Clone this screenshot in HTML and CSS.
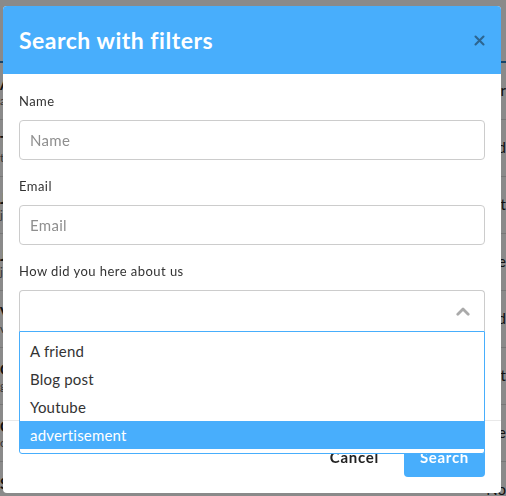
FILE: index.html
```html
<!DOCTYPE html>
<html lang="en">

<head>
    <meta charset="UTF-8">
    <meta name="viewport" content="width=device-width, initial-scale=1.0">
    <title>Search with filters</title>
    <link rel="stylesheet" href="styles.css">
</head>

<body>
    <!-- page behind the modal -->
    <div class="page">
        <div class="topbar"></div>
        <div class="row"><b>Anna Jovanovich</b><span>anna@mail.com</span><em>Newsletter</em></div>
        <div class="row"><b>Tony Vargas</b><span>tony@mail.com</span><em>Friend</em></div>
        <div class="row"><b>Jill Simmons</b><span>jill@mail.com</span><em>Blog post</em></div>
        <div class="row"><b>Jimmy Hall</b><span>jimmy@mail.com</span><em>Youtube</em></div>
        <div class="row"><b>Vera Long</b><span>vera@mail.com</span><em>Friend</em></div>
        <div class="row"><b>Greg Dunn</b><span>greg@mail.com</span><em>Blog post</em></div>
        <div class="row"><b>Carl Stone</b><span>carl@mail.com</span><em>Youtube</em></div>
        <div class="row"><b>Subscribe?</b><span>yes</span><em>No</em></div>
    </div>

    <div class="overlay"></div>

    <div class="modal">
        <div class="modal-header">
            <h2>Search with filters</h2>
            <button class="close" aria-label="Close">
                <svg width="11" height="11" viewBox="0 0 11 11">
                    <path d="M1.5 1.5 L9.5 9.5 M9.5 1.5 L1.5 9.5" stroke="#2d6590" stroke-width="2.1" stroke-linecap="round" />
                </svg>
            </button>
        </div>

        <div class="modal-body">
            <label for="f-name">Name</label>
            <input type="text" id="f-name" placeholder="Name">

            <label for="f-email">Email</label>
            <input type="text" id="f-email" placeholder="Email">

            <label>How did you here about us</label>
            <div class="select">
                <div class="select-box">
                    <svg width="14" height="9" viewBox="0 0 14 9">
                        <path d="M1.8 7.2 L7 2 L12.2 7.2" fill="none" stroke="#aaa" stroke-width="2.8" stroke-linecap="round" stroke-linejoin="round" />
                    </svg>
                </div>
                <ul class="options">
                    <li>A friend</li>
                    <li>Blog post</li>
                    <li>Youtube</li>
                    <li class="active">advertisement</li>
                </ul>
            </div>
        </div>

        <div class="modal-footer">
            <button class="btn-cancel">Cancel</button>
            <button class="btn-search">Search</button>
        </div>
    </div>
</body>

</html>
```

FILE: styles.css
```css
* {
    margin: 0;
    padding: 0;
    box-sizing: border-box;
    font-family: Lato, "Open Sans", sans-serif;
}

body {
    background-color: #fff;
    width: 506px;
    height: 496px;
    overflow: hidden;
}

/* background page */
.page {
    width: 100%;
}

.topbar {
    height: 63px;
    border-bottom: 2px solid #2d7fc0;
}

.row {
    height: 57px;
    border-bottom: 1px solid #ddd;
    display: flex;
    flex-direction: column;
    justify-content: center;
    align-items: flex-start;
    position: relative;
    font-size: 15px;
    color: #222;
}

.row b {
    display: block;
}

.row span {
    font-size: 12px;
    color: #666;
}

.row em {
    position: absolute;
    right: 0;
    top: 18px;
    font-style: normal;
    font-size: 15px;
}

.overlay {
    position: fixed;
    inset: 0;
    background: rgba(0, 0, 0, 0.46);
}

/* modal */
.modal {
    position: absolute;
    left: 3px;
    top: 6px;
    width: 498px;
    height: 487px;
    background-color: #fff;
    border-radius: 4px;
    display: flex;
    flex-direction: column;
}

.modal-header {
    height: 68px;
    background-color: #48aefc;
    border-radius: 4px 4px 0 0;
    display: flex;
    align-items: center;
    justify-content: space-between;
    padding: 0 12px 0 16px;
}

.modal-header h2 {
    color: #fff;
    font-size: 23px;
    font-weight: bold;
    letter-spacing: 0.5px;
}

.close {
    background: none;
    border: none;
    width: 20px;
    height: 20px;
    display: flex;
    align-items: center;
    justify-content: center;
}

.modal-body {
    flex: 1;
    padding: 19px 16px 0;
    display: flex;
    flex-direction: column;
}

label {
    display: block;
    font-size: 13px;
    line-height: 16px;
    letter-spacing: 0.45px;
    color: #333;
    margin-bottom: 11px;
}

input {
    height: 40px;
    padding: 0 10px;
    border: 1px solid #ccc;
    border-radius: 4px;
    font-size: 15px;
    letter-spacing: 0.3px;
    color: #333;
    margin-bottom: 18px;
    width: 100%;
}

input::placeholder {
    color: #8f8f8f;
}

.select {
    position: relative;
}

.select-box {
    height: 41px;
    border: 1px solid #ccc;
    border-radius: 4px 4px 0 0;
    border-bottom: none;
    display: flex;
    align-items: center;
    justify-content: flex-end;
    padding-right: 14px;
}

.options {
    position: absolute;
    left: 0;
    right: 0;
    top: 41px;
    list-style: none;
    background: #fff;
    border: 1px solid #48aefc;
    border-radius: 0 0 3px 3px;
    padding: 5px 0 4px;
    z-index: 2;
}

.options li {
    height: 28px;
    line-height: 28px;
    padding: 0 10px;
    font-size: 15px;
    letter-spacing: 0.2px;
    color: #333;
}

.options li.active {
    background-color: #48aefc;
    color: #fff;
}

.modal-footer {
    border-top: 1px solid #e9e9e9;
    padding: 16px;
    display: flex;
    justify-content: flex-end;
    gap: 9px;
}

.modal-footer button {
    height: 40px;
    padding: 0 16px;
    border: none;
    border-radius: 4px;
    font-size: 15px;
    font-weight: bold;
    letter-spacing: 0.7px;
}

.btn-cancel {
    background: none;
    color: #222;
}

.btn-search {
    background-color: #48aefc;
    color: #fff;
}
```
